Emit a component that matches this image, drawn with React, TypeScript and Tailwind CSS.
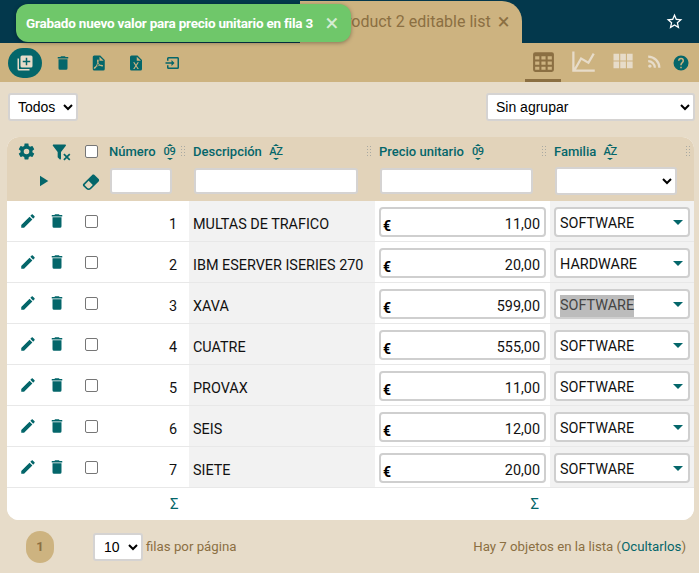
const FONT = "font-['Roboto',sans-serif]";

function Mdi({ d, className }: { d: string; className?: string }) {
  return (
    <svg viewBox="0 0 24 24" className={className} fill="currentColor">
      <path d={d} />
    </svg>
  );
}

const ICONS = {
  pencil: "M20.71,7.04C21.1,6.65 21.1,6 20.71,5.63L18.37,3.29C18,2.9 17.35,2.9 16.96,3.29L15.12,5.12L18.87,8.87M3,17.25V21H6.75L17.81,9.93L14.06,6.18L3,17.25Z",
  trash: "M19,4H15.5L14.5,3H9.5L8.5,4H5V6H19M6,19A2,2 0 0,0 8,21H16A2,2 0 0,0 18,19V7H6V19Z",
  cog: "M12,15.5A3.5,3.5 0 0,1 8.5,12A3.5,3.5 0 0,1 12,8.5A3.5,3.5 0 0,1 15.5,12A3.5,3.5 0 0,1 12,15.5M19.43,12.97C19.47,12.65 19.5,12.33 19.5,12C19.5,11.67 19.47,11.34 19.43,11L21.54,9.37C21.73,9.22 21.78,8.95 21.66,8.73L19.66,5.27C19.54,5.05 19.27,4.96 19.05,5.05L16.56,6.05C16.04,5.66 15.5,5.32 14.87,5.07L14.5,2.42C14.46,2.18 14.25,2 14,2H10C9.75,2 9.54,2.18 9.5,2.42L9.13,5.07C8.5,5.32 7.96,5.66 7.44,6.05L4.95,5.05C4.73,4.96 4.46,5.05 4.34,5.27L2.34,8.73C2.21,8.95 2.27,9.22 2.46,9.37L4.57,11C4.53,11.34 4.5,11.67 4.5,12C4.5,12.33 4.53,12.65 4.57,12.97L2.46,14.63C2.27,14.78 2.21,15.05 2.34,15.27L4.34,18.73C4.46,18.95 4.73,19.03 4.95,18.95L7.44,17.94C7.96,18.34 8.5,18.68 9.13,18.93L9.5,21.58C9.54,21.82 9.75,22 10,22H14C14.25,22 14.46,21.82 14.5,21.58L14.87,18.93C15.5,18.67 16.04,18.34 16.56,17.94L19.05,18.95C19.27,19.03 19.54,18.95 19.66,18.73L21.66,15.27C21.78,15.05 21.73,14.78 21.54,14.63L19.43,12.97Z",
  filterRemove: "M14.76,20.83L17.6,18L14.76,15.17L16.17,13.76L19,16.57L21.83,13.76L23.24,15.17L20.43,18L23.24,20.83L21.83,22.24L19,19.4L16.17,22.24L14.76,20.83M12,12V19.88C12.04,20.18 11.94,20.5 11.71,20.71C11.32,21.1 10.69,21.1 10.3,20.71L8.29,18.7C8.06,18.47 7.96,18.16 8,17.87V12H7.97L2.21,4.62C1.87,4.19 1.95,3.56 2.38,3.22C2.57,3.08 2.78,3 3,3V3H17V3C17.22,3 17.43,3.08 17.62,3.22C18.05,3.56 18.13,4.19 17.79,4.62L12.03,12H12Z",
  eraser: "M16.24,3.56L21.19,8.5C21.97,9.29 21.97,10.55 21.19,11.34L12,20.53C10.44,22.09 7.91,22.09 6.34,20.53L2.81,17C2.03,16.21 2.03,14.95 2.81,14.16L13.41,3.56C14.2,2.78 15.46,2.78 16.24,3.56M4.22,15.58L7.76,19.11C8.54,19.9 9.8,19.9 10.59,19.11L14.12,15.58L9.17,10.63L4.22,15.58Z",
  play: "M8,5.14V19.14L19,12.14L8,5.14Z",
  table: "M4,3H20A2,2 0 0,1 22,5V20A2,2 0 0,1 20,22H4A2,2 0 0,1 2,20V5A2,2 0 0,1 4,3M4,7V10H8V7H4M10,7V10H14V7H10M20,10V7H16V10H20M4,12V15H8V12H4M4,20H8V17H4V20M10,12V15H14V12H10M10,20H14V17H10V20M20,20V17H16V20H20M20,12H16V15H20V12Z",
  chart: "M16,11.78L20.24,4.45L21.97,5.45L16.74,14.5L10.23,10.75L5.46,19H22V21H2V3H4V17.54L9.5,8L16,11.78Z",
  module: "M16,5V11H21V5M10,11H15V5H10M16,18H21V12H16M10,18H15V12H10M4,11H9V5H4M4,18H9V12H4V18Z",
  rss: "M6.18,15.64A2.18,2.18 0 0,1 8.36,17.82C8.36,19 7.38,20 6.18,20C5,20 4,19 4,17.82A2.18,2.18 0 0,1 6.18,15.64M4,4.44A15.56,15.56 0 0,1 19.56,20H16.73A12.73,12.73 0 0,0 4,7.27V4.44M4,10.1A9.9,9.9 0 0,1 13.9,20H11.07A7.07,7.07 0 0,0 4,12.93V10.1Z",
  help: "M15.07,11.25L14.17,12.17C13.45,12.89 13,13.5 13,15H11V14.5C11,13.39 11.45,12.39 12.17,11.67L13.41,10.41C13.78,10.05 14,9.55 14,9C14,7.89 13.1,7 12,7A2,2 0 0,0 10,9H8A4,4 0 0,1 12,5A4,4 0 0,1 16,9C16,9.88 15.64,10.67 15.07,11.25M13,19H11V17H13M12,2A10,10 0 0,0 2,12A10,10 0 0,0 12,22A10,10 0 0,0 22,12C22,6.47 17.5,2 12,2Z",
  star: "M12,15.39L8.24,17.66L9.23,13.38L5.91,10.5L10.29,10.13L12,6.09L13.71,10.13L18.09,10.5L14.77,13.38L15.76,17.66M22,9.24L14.81,8.63L12,2L9.19,8.62L2,9.24L7.45,13.97L5.82,21L12,17.27L18.18,21L16.54,13.97L22,9.24Z",
  plusBox: "M19,11H15V15H13V11H9V9H13V5H15V9H19M20,2H8A2,2 0 0,0 6,4V16A2,2 0 0,0 8,18H20A2,2 0 0,0 22,16V4A2,2 0 0,0 20,2M4,6H2V20A2,2 0 0,0 4,22H18V20H4V6Z",
  pdf: "M14,9H19.5L14,3.5V9M7,2H15L21,8V20A2,2 0 0,1 19,22H7C5.89,22 5,21.1 5,20V4A2,2 0 0,1 7,2M11.93,12.44C12.34,13.34 12.86,14.08 13.46,14.59L13.87,14.91C13,15.07 11.8,15.35 10.53,15.84V15.84L10.42,15.88L10.92,14.84C11.37,13.97 11.7,13.18 11.93,12.44M18.41,16.25C18.59,16.07 18.68,15.84 18.69,15.59C18.72,15.39 18.67,15.2 18.57,15.04C18.28,14.57 17.53,14.35 16.29,14.35L15,14.42L14.13,13.84C13.5,13.32 12.93,12.41 12.53,11.28L12.57,11.14C12.9,9.81 13.21,8.2 12.55,7.54C12.39,7.38 12.17,7.3 11.94,7.3H11.7C11.33,7.3 11,7.69 10.91,8.07C10.54,9.4 10.76,10.13 11.13,11.34V11.35C10.88,12.23 10.56,13.25 10.05,14.28L9.09,16.08L8.2,16.57C7,17.32 6.43,18.16 6.32,18.69C6.28,18.88 6.3,19.05 6.37,19.23L6.4,19.28L6.88,19.59L7.32,19.7C8.13,19.7 9.05,18.75 10.29,16.63L10.47,16.56C11.5,16.23 12.78,16 14.5,15.81C15.53,16.32 16.74,16.55 17.5,16.55C17.94,16.55 18.24,16.44 18.41,16.25Z",
  excel: "M14,2H6A2,2 0 0,0 4,4V20A2,2 0 0,0 6,22H18A2,2 0 0,0 20,20V8L14,2M15.8,20H14L12,16.6L10,20H8.2L11.1,15.5L8.2,11H10L12,14.4L14,11H15.8L12.9,15.5L15.8,20M13,9V3.5L18.5,9H13Z",
  importBox: "M14,12L10,8V11H2V13H10V16M20,18V6C20,4.89 19.1,4 18,4H6A2,2 0 0,0 4,6V9H6V6H18V18H6V15H4V18A2,2 0 0,0 6,20H18A2,2 0 0,0 20,18Z",
};

const ROWS = [
  { n: 1, desc: "MULTAS DE TRAFICO", price: "11,00", fam: "SOFTWARE" },
  { n: 2, desc: "IBM ESERVER ISERIES 270", price: "20,00", fam: "HARDWARE" },
  { n: 3, desc: "XAVA", price: "599,00", fam: "SOFTWARE", picked: true },
  { n: 4, desc: "CUATRE", price: "555,00", fam: "SOFTWARE" },
  { n: 5, desc: "PROVAX", price: "11,00", fam: "SOFTWARE" },
  { n: 6, desc: "SEIS", price: "12,00", fam: "SOFTWARE" },
  { n: 7, desc: "SIETE", price: "20,00", fam: "SOFTWARE" },
];

function SortMark({ label }: { label: string }) {
  return (
    <span className="relative ml-[6px] inline-flex h-[16px] w-[16px] items-center justify-center text-[11px] font-medium leading-none tracking-[-0.3px] text-[#04666a]">
      <span className="absolute top-0 h-0 w-0 border-x-[3px] border-b-[2px] border-x-transparent border-b-[#04666a]" />
      {label}
      <span className="absolute bottom-0 h-0 w-0 border-x-[3px] border-t-[2px] border-x-transparent border-t-[#04666a]" />
    </span>
  );
}

function Grip() {
  return <span className="mr-[4px] ml-auto block h-[13px] w-[5px] bg-[radial-gradient(circle,#a9a9a2_1px,transparent_1px)] bg-[length:3px_3px]" />;
}

function Check() {
  return <span className="block h-[13px] w-[13px] rounded-[2px] border border-[#767676] bg-white" />;
}

function HeaderField({ className }: { className: string }) {
  return <input aria-label="filtro" className={`mt-[2px] h-[26px] rounded-[3px] border-2 border-[#d5d3d2] bg-white ${className}`} />;
}

function Row({ row }: { row: (typeof ROWS)[number] }) {
  return (
    <div className="flex h-[41px] border-b border-[#e8e8e8]">
      <div className="flex w-[182px] bg-white">
        <Mdi d={ICONS.pencil} className="ml-[11.5px] mt-[10.5px] h-[18px] w-[18px] text-[#04666a]" />
        <Mdi d={ICONS.trash} className="ml-[11px] mt-[10.5px] h-[18px] w-[18px] text-[#04666a]" />
        <span className="ml-[19.5px] mt-[14px]"><Check /></span>
        <span className="ml-auto mr-[12px] mt-[14px] text-[14.4px] leading-[20px] text-[#111]">{row.n}</span>
      </div>
      <div className="w-[186px] truncate bg-[#f2f2f2] pl-[4px] pt-[14px] text-[14.4px] leading-[20px] text-[#111]">{row.desc}</div>
      <div className="flex w-[175px] items-start bg-white pl-[4px] pt-[6px]">
        <div className="relative flex h-[30px] w-[167px] items-center justify-end rounded-[4px] border-[2px] border-[#cfcfcf] bg-white pr-[4px] pt-[5px] text-[14.4px] text-[#111]">
          <span className="absolute bottom-0 left-[2px] text-[14px] font-bold leading-[18px] text-black">€</span>
          {row.price}
        </div>
      </div>
      <div className="flex flex-1 items-start bg-[#f2f2f2] pl-[4px] pt-[6px]">
        <div className="flex h-[30px] w-[136px] items-center rounded-[4px] border-[2px] border-[#cfcfcf] bg-white pl-[4px] pr-[5px] text-[14.4px] text-[#111]">
          <span className={`mt-[4px] ${row.picked ? "bg-[#bcbcbc] text-[#444]" : ""}`}>{row.fam}</span>
          <span className="ml-auto h-0 w-0 border-x-[5px] border-t-[5px] border-x-transparent border-t-[#04666a]" />
        </div>
      </div>
    </div>
  );
}

export default function App() {
  return (
    <div className={`relative h-[573px] w-[699px] overflow-hidden bg-[#e7dcc9] ${FONT}`}>
      <header className="flex h-[43px] items-end bg-[#03384c]">
        <div className="ml-[300px] flex h-[42px] w-[222px] items-center whitespace-nowrap rounded-tr-[20px] bg-[#cdb380] pl-[37px] text-[16px] text-[#8b6f42]">
          <span>product 2 editable list</span>
          <span className="ml-[7px] text-[22px] leading-none">×</span>
        </div>
        <Mdi d={ICONS.star} className="ml-auto mb-[12px] mr-[15px] h-[19px] w-[19px] text-white" />
      </header>

      {/* toast over the tab bar */}
      <div className="absolute left-[16px] top-[4px] flex h-[38px] w-[335px] items-center rounded-[12px] bg-[#6fc76a] pl-[10px] text-[13.5px] font-bold tracking-[-0.22px] text-white shadow-[0_1px_4px_rgba(0,0,0,0.35)]">
        Grabado nuevo valor para precio unitario en fila 3
        <span className="ml-auto mr-[13px] text-[24px] font-normal leading-none text-[#d5ecd2]">×</span>
      </div>

      <div className="flex h-[39px] items-center bg-[#cdb380] pl-[8px] pr-[9.5px]">
        <span className="flex h-[30px] w-[34px] items-center justify-center rounded-full bg-[#04666a]">
          <Mdi d={ICONS.plusBox} className="h-[18px] w-[18px] text-[#e7dcc9]" />
        </span>
        <Mdi d={ICONS.trash} className="ml-[11.5px] h-[18px] w-[18px] text-[#04666a]" />
        <Mdi d={ICONS.pdf} className="ml-[17.5px] h-[18px] w-[18px] text-[#04666a]" />
        <Mdi d={ICONS.excel} className="ml-[20px] h-[18px] w-[18px] text-[#04666a]" />
        <Mdi d={ICONS.importBox} className="ml-[18.75px] h-[18px] w-[18px] text-[#04666a]" />
        <div className="ml-auto flex h-full items-center">
          <span className="flex h-full w-[36px] items-center justify-center border-b-[3px] border-[#8b6f42]">
            <Mdi d={ICONS.table} className="h-[25px] w-[25px] text-[#8b6f42]" />
          </span>
          <Mdi d={ICONS.chart} className="mb-[2px] ml-[8.5px] h-[27px] w-[27px] text-[#e7dcc9]" />
          <Mdi d={ICONS.module} className="mb-[3px] ml-[12.5px] h-[27px] w-[27px] text-[#e7dcc9]" />
          <Mdi d={ICONS.rss} className="mb-[2px] ml-[8.5px] h-[19px] w-[19px] text-[#e7dcc9]" />
          <Mdi d={ICONS.help} className="ml-[8px] h-[18px] w-[18px] text-[#04666a]" />
        </div>
      </div>

      <div className="flex items-center justify-between pl-[8px] pr-[4px] pt-[11px]">
        <select className="h-[28px] w-[70px] rounded-[3px] border-2 border-[#d5d3d2] bg-white pl-[4px] font-['Liberation_Sans',sans-serif] text-[14px] text-black">
          <option>Todos</option>
        </select>
        <select className="h-[28px] w-[209px] rounded-[3px] border-2 border-[#d5d3d2] bg-white pl-[4px] font-['Liberation_Sans',sans-serif] text-[14px] text-black">
          <option>Sin agrupar</option>
        </select>
      </div>

      <section className="mx-[7px] mt-[16px] w-[687px] overflow-hidden rounded-[12px] bg-white">
        <div className="h-[64px] bg-[#e2d3ba]">
          <div className="flex h-[29px] items-center text-[13px] font-medium text-[#04666a]">
            <div className="flex w-[182px] items-center">
              <Mdi d={ICONS.cog} className="ml-[10px] h-[19px] w-[19px]" />
              <Mdi d={ICONS.filterRemove} className="ml-[14.5px] h-[20px] w-[20px]" />
              <span className="ml-[14.5px]"><Check /></span>
              <span className="ml-[11px]">Número</span>
              <SortMark label="09" />
              <Grip />
            </div>
            <div className="flex w-[186px] items-center pl-[4px]">
              <span>Descripción</span>
              <SortMark label="AZ" />
              <Grip />
            </div>
            <div className="flex w-[175px] items-center pl-[4px]">
              <span>Precio unitario</span>
              <SortMark label="09" />
              <Grip />
            </div>
            <div className="flex flex-1 items-center pl-[4px]">
              <span>Familia</span>
              <SortMark label="AZ" />
              <Grip />
            </div>
          </div>
          <div className="flex h-[35px] items-start text-[#04666a]">
            <Mdi d={ICONS.play} className="ml-[26.5px] mt-[6px] h-[18px] w-[18px]" />
            <Mdi d={ICONS.eraser} className="ml-[29.5px] mt-[6px] h-[20px] w-[20px]" />
            <HeaderField className="ml-[9px] w-[62px]" />
            <HeaderField className="ml-[22px] w-[164px]" />
            <HeaderField className="ml-[22px] w-[153px]" />
            <select aria-label="familia" className="ml-[22px] mt-[1px] h-[28px] w-[122px] rounded-[3px] border-2 border-[#d5d3d2] bg-white text-[14px] text-black" />
          </div>
        </div>
        {ROWS.map((row) => (
          <Row key={row.n} row={row} />
        ))}
        <div className="flex h-[32px] items-center bg-white text-[15px] text-[#04666a]">
          <span className="ml-[163px]">Σ</span>
          <span className="ml-[352px]">Σ</span>
        </div>
      </section>

      <footer className="flex h-[53px] items-center text-[13.25px] text-[#8b6f42]">
        <span className="ml-[26px] flex h-[32px] w-[28px] items-center justify-center rounded-full bg-[#cdb380] text-[13px] font-bold">1</span>
        <select className="ml-[39px] h-[28px] w-[50px] rounded-[3px] border-2 border-[#d5d3d2] bg-white pl-[5px] font-['Liberation_Sans',sans-serif] text-[14px] text-black">
          <option>10</option>
        </select>
        <span className="ml-[3px]">filas por página</span>
        <span className="ml-auto mr-[13px]">
          Hay 7 objetos en la lista (<span className="text-[#04666a]">Ocultarlos</span>)
        </span>
      </footer>
    </div>
  );
}
